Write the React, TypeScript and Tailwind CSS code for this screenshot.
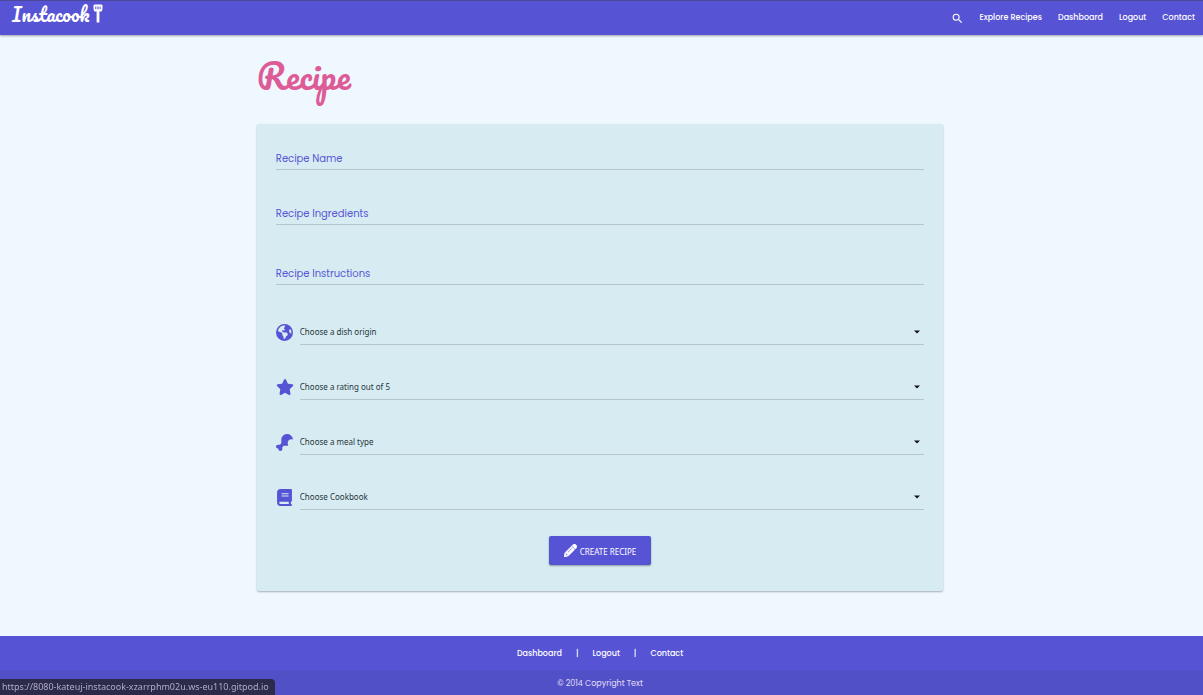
import type { ReactNode } from "react";
import { FaBook, FaDrumstickBite, FaEarthAmericas, FaPencil, FaStar } from "react-icons/fa6";
import { MdSearch } from "react-icons/md";

const sans = "font-['Poppins','Inter',sans-serif]";
const ui = "font-['Segoe_UI','Noto_Sans',sans-serif]";
const script = "font-['Pacifico','Lato',cursive] font-normal";

function Spatula() {
  return (
    <svg viewBox="0 0 10 20" className="h-5 w-[10px]" fill="currentColor" aria-hidden="true">
      <path
        fillRule="evenodd"
        d="M1.800.5h6.400q1.500 0 1.400 1.500l-.3 4q-.1 1.600-1.600 1.600H6.400v10.900H3.600V7.600H2.300Q.8 7.600.7 6L.4 2Q.3.500 1.800.500zM2.300 2.400v2.800h1V2.400zm2.100 0v2.800h1.100V2.400zm2.200 0v2.800h1V2.400z"
      />
    </svg>
  );
}

function TextField({ id, label }: { id: string; label: string }) {
  return (
    <div className={`grid border-b border-[#b6c5ca] text-[10px] leading-5 ${sans}`}>
      <label htmlFor={id} className="col-start-1 row-start-1 text-[#5a55d6]">
        {label}
      </label>
      <input
        id={id}
        type="text"
        className="col-start-1 row-start-1 h-5 w-full bg-transparent text-[#333] outline-none"
      />
    </div>
  );
}

function SelectField({ id, label, icon }: { id: string; label: string; icon: ReactNode }) {
  return (
    <div className="flex items-center">
      <label htmlFor={id} aria-label={label} className="w-6 shrink-0 text-[#5753d5]">
        {icon}
      </label>
      <div className="grid grow items-center border-b border-[#b6c5ca]">
        <select
          id={id}
          defaultValue=""
          className={`col-start-1 row-start-1 h-[25px] w-full appearance-none bg-transparent text-[8px] text-[#26343a] outline-none ${ui}`}
        >
          <option value="">{label}</option>
        </select>
        <svg
          viewBox="0 0 6 4"
          className="pointer-events-none col-start-1 row-start-1 mr-1 h-1 w-1.5 justify-self-end"
          aria-hidden="true"
        >
          <path d="M0 0.500h6L3 3.500z" fill="#111" />
        </svg>
      </div>
    </div>
  );
}

export default function App() {
  return (
    <div className={`flex min-h-screen flex-col bg-[#eff7ff] ${sans}`}>
      <header className="flex h-[35px] items-center justify-between border-t border-[#4c4898] bg-[#5753d5] px-2 text-white shadow-[0_1px_2px_rgba(0,0,0,0.35)]">
        <a href="#" className="ml-1 flex items-center gap-1 self-start">
          <span className={`text-[19px] leading-[26px] ${script}`}>Instacook</span>
          <Spatula />
        </a>
        <nav className="flex items-center gap-4 text-[8px] font-medium">
          <a href="#" aria-label="Search">
            <MdSearch className="size-[13px]" />
          </a>
          <a href="#">Explore Recipes</a>
          <a href="#">Dashboard</a>
          <a href="#">Logout</a>
          <a href="#">Contact</a>
        </nav>
      </header>

      <div className="grow pr-[3px]">
        <main className="mx-auto w-[57.2%] pb-11">
          <h1 className={`pt-[11px] pb-[18px] text-[34px] leading-[60px] text-[#dd5b96] ${script}`}>Recipe</h1>
          <form className="rounded-xs bg-[#d6ecf2] px-[19px] pt-[25px] pb-[26px] shadow-[0_1px_2px_rgba(0,0,0,0.3)]">
            <div className="flex flex-col gap-[34px]">
              <TextField id="name" label="Recipe Name" />
              <TextField id="ingredients" label="Recipe Ingredients" />
              <div className="pt-[5px]">
                <TextField id="instructions" label="Recipe Instructions" />
              </div>
            </div>
            <div className="flex flex-col gap-[29px] pt-[34px]">
              <SelectField id="origin" label="Choose a dish origin" icon={<FaEarthAmericas className="size-[17px]" />} />
              <SelectField id="rating" label="Choose a rating out of 5" icon={<FaStar className="size-[18px]" />} />
              <SelectField id="meal" label="Choose a meal type" icon={<FaDrumstickBite className="size-[17px]" />} />
              <SelectField id="cookbook" label="Choose Cookbook" icon={<FaBook className="size-[17px]" />} />
            </div>
            <div className="flex justify-center pt-[26px]">
              <button
                type="button"
                className={`flex h-[29px] items-center gap-[3px] rounded-xs bg-[#5753d5] px-[15px] text-[8px] text-white shadow-[0_1px_2px_rgba(0,0,0,0.35)] ${ui}`}
              >
                <FaPencil className="size-[13px]" stroke="currentColor" strokeWidth="24" />
                <span className="pt-0.5">CREATE RECIPE</span>
              </button>
            </div>
          </form>
        </main>
      </div>

      <footer className="bg-[#5753d5] text-center text-[8px] text-white">
        <nav className="flex h-[34px] items-center justify-center gap-[14px] pt-0.5 pr-[3px] font-medium">
          <a href="#">Dashboard</a>
          <span>|</span>
          <a href="#">Logout</a>
          <span>|</span>
          <a href="#">Contact</a>
        </nav>
        <p className="bg-[#5250c6] pt-0.5 pr-[3px] leading-[23px] text-[#e0dff6]">© 2014 Copyright Text</p>
      </footer>

      <div
        className={`fixed bottom-0 left-0 rounded-tr-sm bg-[#2c2b4a] pr-1.5 pl-0.5 text-[9px] leading-4 text-[#b0acc9] ${ui}`}
      >
        https://8080-kateuj-instacook-xzarrphm02u.ws-eu110.gitpod.io
      </div>
    </div>
  );
}
